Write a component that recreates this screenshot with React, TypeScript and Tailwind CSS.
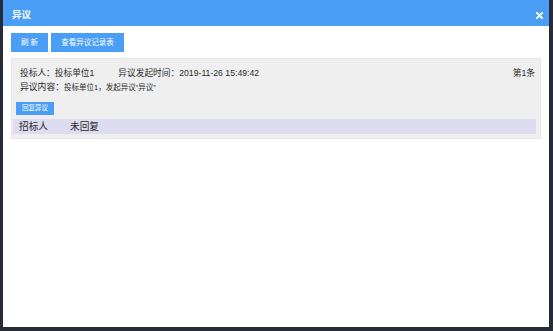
import React from "react";

const font = { fontFamily: '"Liberation Sans", "Noto Sans CJK SC", sans-serif' };

export default function App() {
  return (
    <div className="w-[553px] h-[331px] bg-[#262b37] pl-[3px] pr-[4px] pb-[4px] overflow-hidden" style={font}>
      <div className="w-full h-full bg-white flex flex-col">
        <div className="h-[26px] bg-[#4a9ef6] flex items-center justify-between pt-[4px] pl-[9px] pr-[6px] shrink-0">
          <span className="text-white text-[9.5px] font-bold leading-none">异议</span>
          <svg width="7" height="7" viewBox="0 0 7 7" className="block">
            <path d="M1 1 L6 6 M6 1 L1 6" stroke="white" strokeWidth="1.8" strokeLinecap="square" />
          </svg>
        </div>
        <div className="px-[8px] pt-[7px]">
          <div className="flex gap-[3px]">
            <button className="h-[19px] w-[37px] bg-[#4a9ef6] text-white text-[7.5px] leading-none flex items-center justify-center">刷 新</button>
            <button className="h-[19px] w-[73px] bg-[#4a9ef6] text-white text-[7.5px] leading-none flex items-center justify-center">查看异议记录表</button>
          </div>
          <div className="mt-[6px] bg-[#efefef] border border-[#e6e6e6] pt-[6px] pb-[4px] pl-[1px] pr-[4px] text-[#2b2b2b]">
            <div className="flex items-center h-[16px] pl-[7px] pr-[1px] text-[8.7px] leading-none">
              <span>投标人：投标单位1</span>
              <span className="ml-[24px]">异议发起时间：2019-11-26 15:49:42</span>
              <span className="ml-auto">第1条</span>
            </div>
            <div className="flex items-center h-[13px] pl-[7px] leading-none">
              <span className="text-[8.8px]">异议内容：</span>
              <span className="text-[7.5px]">投标单位1，发起异议“异议”</span>
            </div>
            <div className="mt-[8px] ml-[3px]">
              <button className="h-[13px] w-[38px] bg-[#4a9ef6] text-white text-[6.5px] leading-none flex items-center justify-center">回复异议</button>
            </div>
            <div className="mt-[4px] h-[15px] bg-[#dedcf0] flex items-center pl-[6px] text-[9.7px] leading-none">
              <span className="w-[51px]">招标人</span>
              <span>未回复</span>
            </div>
          </div>
        </div>
      </div>
    </div>
  );
}
